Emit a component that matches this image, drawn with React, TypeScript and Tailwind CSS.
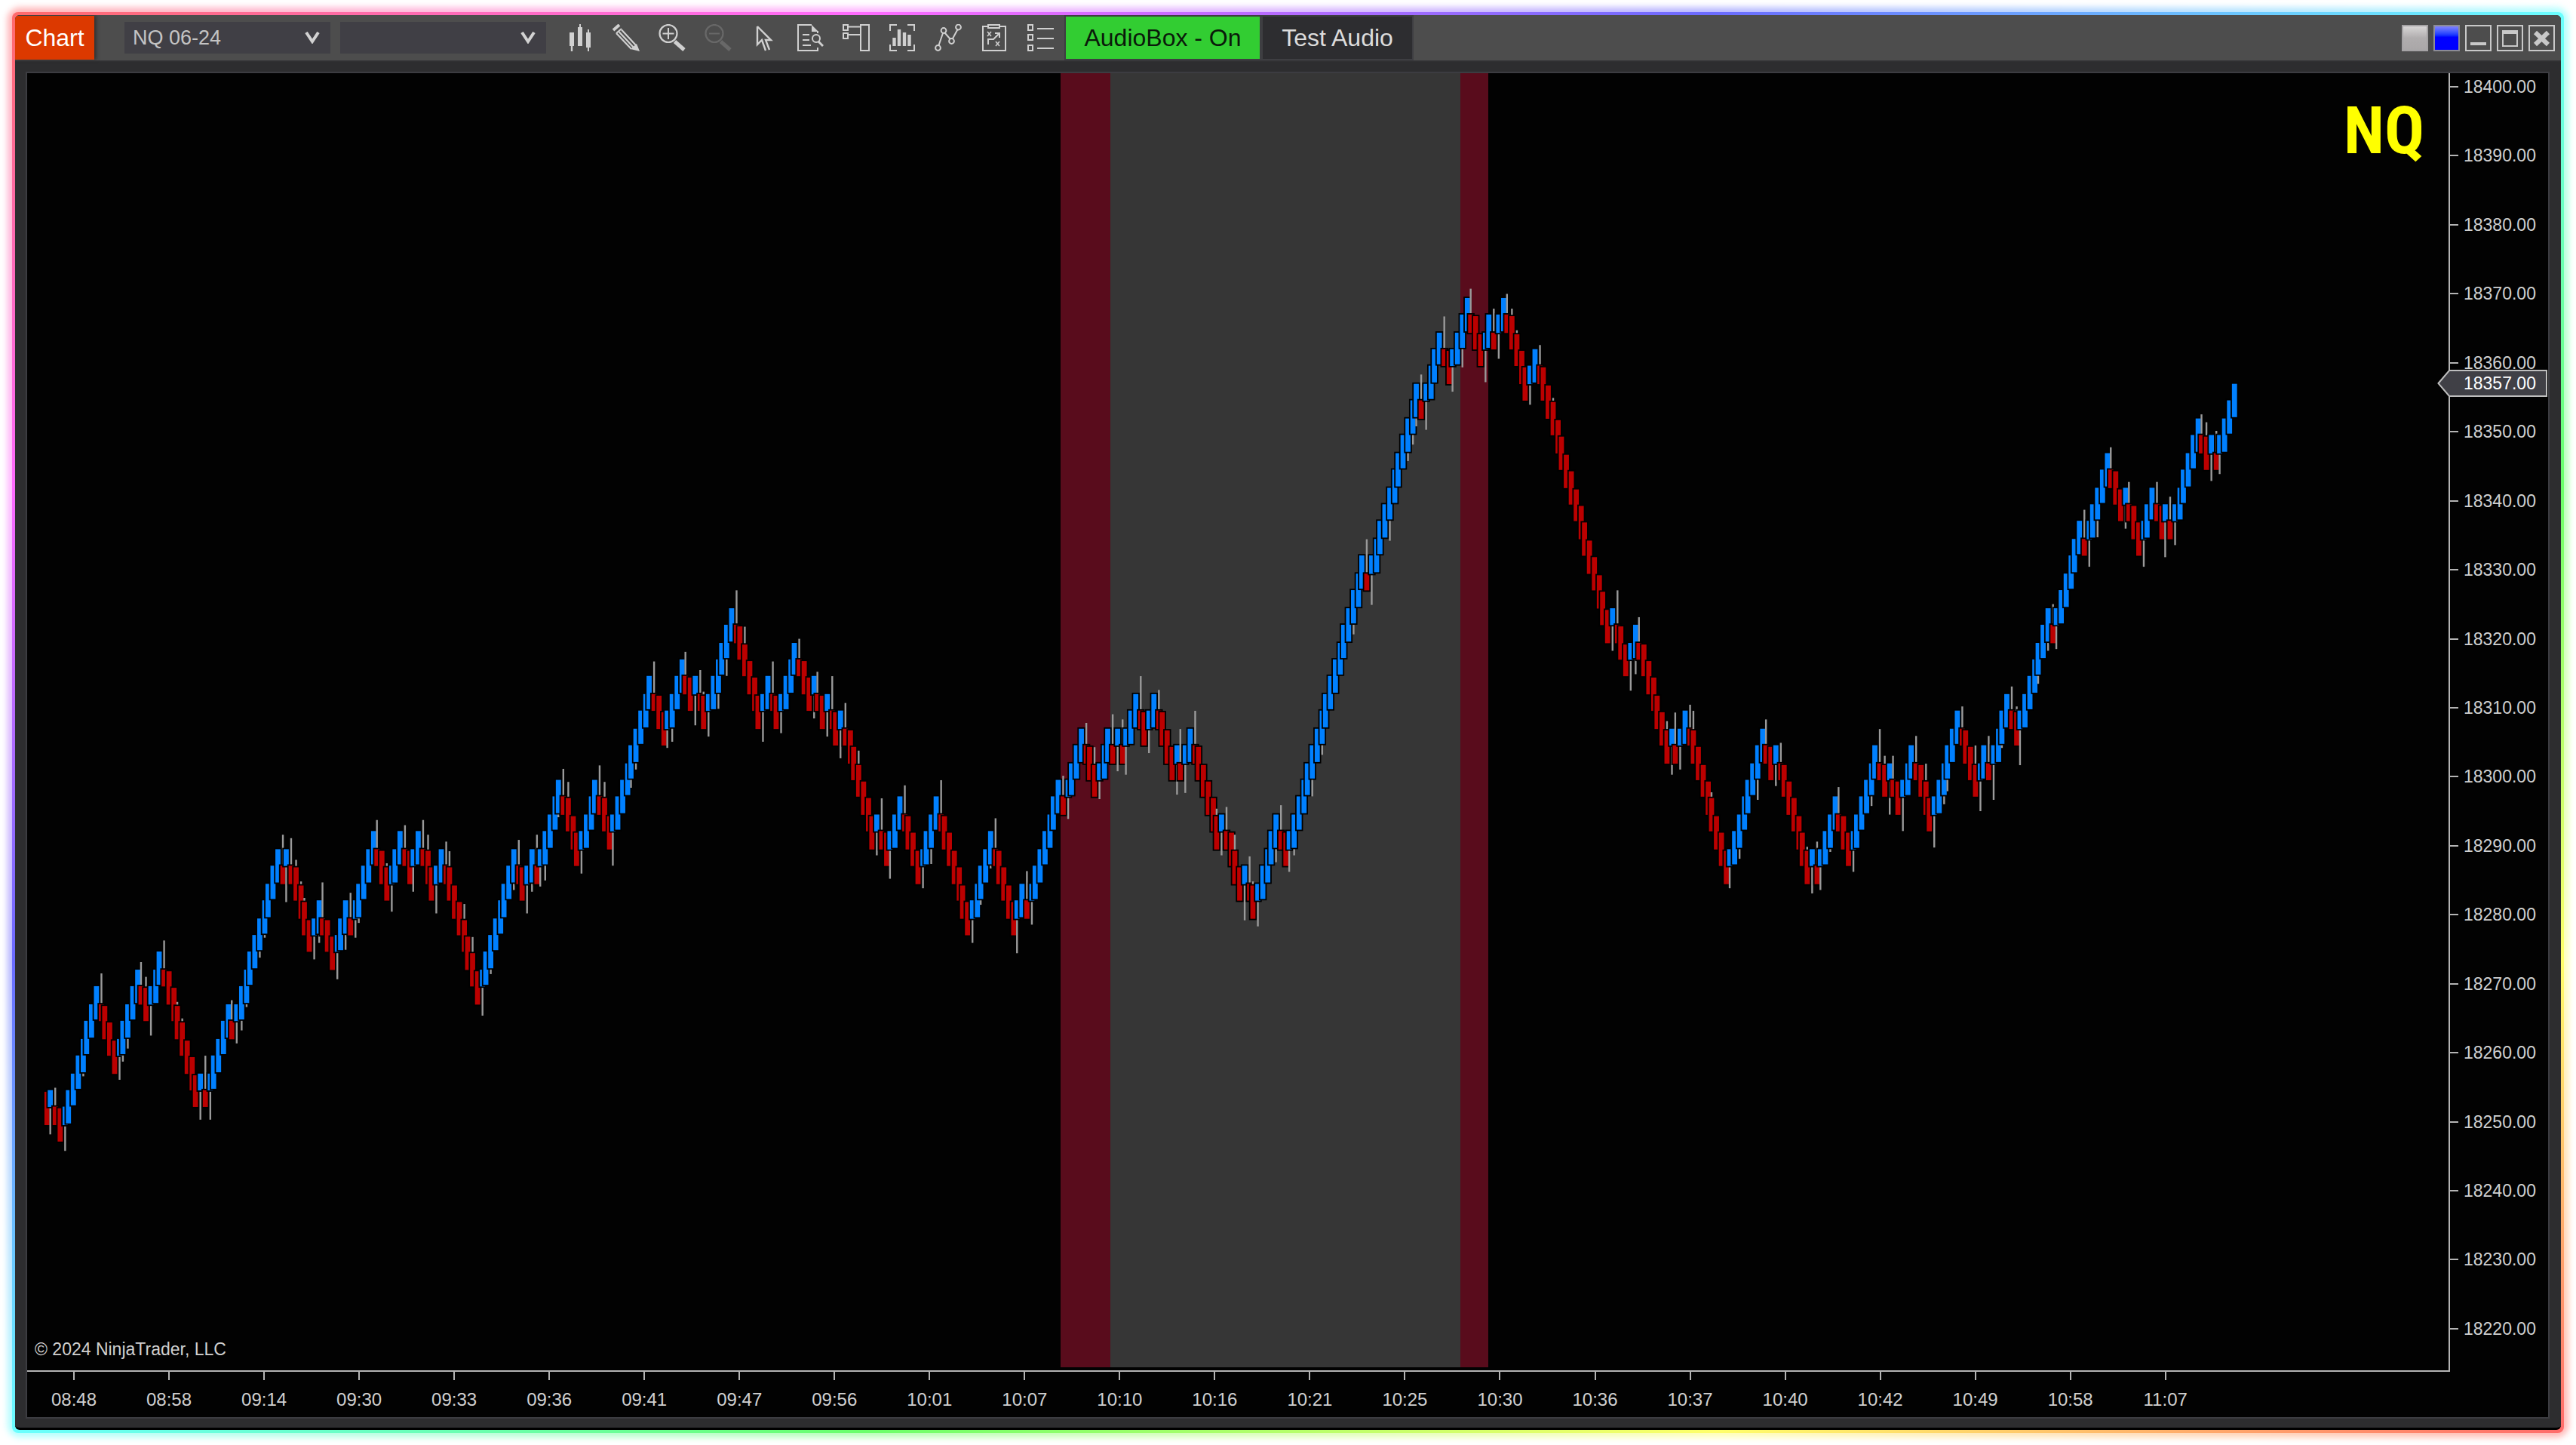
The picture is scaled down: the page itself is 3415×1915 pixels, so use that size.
import type { ReactNode } from 'react';
import clsx from 'clsx';

const times = [
  '08:48', '08:58', '09:14', '09:30', '09:33', '09:36', '09:41', '09:47', '09:56', '10:01', '10:07', '10:10',
  '10:16', '10:21', '10:25', '10:30', '10:36', '10:37', '10:40', '10:42', '10:49', '10:58', '11:07'
];

const prices = Array.from({ length: 19 }, (_, i) => `${18400 - i * 10}.00`);

// Renko swings: [brick level where the swing ends, ticks the first bar's wick reaches past the previous swing]
const swings: [number, number][] = [
  [3, 5], [0, 1], [9, 5], [4, 7], [10, 3], [7, 4], [11, 8], [2, 6], [4, 7], [2, 10], [8, 7], [6, 2], [17, 2],
  [15, 8], [17, 10], [11, 6], [14, 4], [10, 10], [14, 5], [12, 4], [18, 1], [14, 6], [18, 6], [15, 3], [18, 4],
  [14, 6], [17, 7], [8, 4], [17, 6], [14, 5], [17, 7], [15, 8], [21, 1], [16, 6], [21, 4], [17, 8], [27, 9],
  [23, 8], [28, 1], [25, 4], [27, 8], [24, 3], [31, 4], [24, 10], [27, 7], [24, 8], [29, 2], [25, 2], [27, 4],
  [24, 2], [26, 4], [23, 10], [25, 7], [17, 4], [19, 3], [16, 9], [20, 7], [15, 6], [20, 2], [12, 9], [18, 4],
  [12, 7], [15, 10], [13, 7], [21, 3], [19, 2], [24, 2], [20, 3], [24, 1], [22, 8], [24, 4], [22, 5], [26, 6],
  [23, 10], [26, 4], [21, 2], [23, 8], [21, 9], [24, 7], [17, 10], [19, 3], [14, 4], [16, 11], [13, 5], [19, 4],
  [16, 5], [34, 3], [32, 9], [44, 8], [42, 5], [47, 6], [44, 9], [49, 4], [45, 5], [48, 9], [46, 3], [49, 5],
  [43, 2], [46, 2], [29, 2], [31, 4], [27, 10], [30, 8], [22, 4], [24, 6], [22, 9], [25, 3], [15, 3], [24, 2],
  [21, 5], [23, 3], [15, 1], [17, 5], [15, 4], [20, 3], [16, 5], [23, 3], [20, 9], [22, 10], [19, 4], [23, 9],
  [18, 5], [25, 9], [20, 2], [23, 8], [21, 5], [26, 11], [23, 4], [31, 11], [29, 2], [36, 3], [34, 6], [40, 6],
  [36, 3], [38, 4], [34, 3], [38, 6], [35, 3], [37, 10], [35, 4], [42, 3], [39, 2], [41, 6], [39, 2], [44, 2]
];

// ticks of open-side wick on bars inside a swing, by bar number
const innerWicks: Record<number, number> = {
  8: 1, 17: 3, 18: 5, 22: 5, 29: 1, 30: 1, 43: 5, 44: 1, 47: 3, 48: 1, 55: 3, 56: 1, 57: 1, 60: 4, 66: 8, 69: 2,
  75: 1, 84: 8, 89: 8, 92: 8, 94: 8, 98: 2, 103: 3, 107: 4, 110: 8, 113: 1, 115: 8, 123: 8, 129: 4, 130: 3,
  138: 7, 145: 1, 148: 8, 150: 9, 154: 9, 179: 7, 195: 8, 206: 2, 208: 1, 231: 9, 258: 3, 262: 8, 266: 1,
  271: 7, 275: 3, 279: 9, 281: 5, 288: 5, 296: 11, 300: 4, 301: 5, 302: 4, 312: 10, 323: 3, 324: 1, 332: 1,
  350: 8, 357: 4, 363: 10, 367: 2, 373: 5, 377: 11, 388: 1, 393: 1, 402: 5, 405: 4, 414: 9, 418: 4, 419: 6,
  425: 10, 431: 1, 434: 2, 439: 4, 441: 4, 452: 9, 476: 7
};

const PLOT_W = 3210;
const PLOT_H = 1719;
const UNIT = 2.187;
const TICK = 2.286;

type Bar = { x: number; top: number; bottom: number; up: boolean; wickFrom: number; wickTo: number };

const barX = (k: number) => 26.3 + UNIT * (3 * k - Math.ceil((k * 42) / 169));
const levelY = (level: number) => 708.2 + UNIT * Math.floor(10.44 * (31 - level) + 0.14);

const buildBars = () => {
  const bars: Bar[] = [];
  const add = (close: number, up: boolean, reversal: boolean, reach: number) => {
    const height = reversal ? 1 : 2;
    const high = up ? close : close + height;
    const low = up ? close - height : close;
    const top = levelY(high) + (!up && !reversal ? UNIT : 0);
    const bottom = levelY(low) + (up && !reversal ? 0 : UNIT);
    const past = reversal ? 1 : 0;
    const wickTo = up ? levelY(low - past) + UNIT + reach * TICK : levelY(high + past) - reach * TICK;
    bars.push({ x: barX(bars.length), top, bottom, up, wickFrom: up ? bottom : top, wickTo: reach ? wickTo : up ? bottom : top });
  };

  let level = 1;
  add(level, false, false, 0);
  swings.forEach(([end, reach]) => {
    const up = end > level;
    const step = up ? 1 : -1;
    level += 2 * step;
    add(level, up, true, reach);
    while (level !== end) {
      level += step;
      add(level, up, false, innerWicks[bars.length] ?? 0);
    }
  });
  return bars;
};

const bars = buildBars();

const Plot = () => (
  <svg
    className="absolute inset-0 h-full w-full"
    viewBox={`0 0 ${PLOT_W} ${PLOT_H}`}
    preserveAspectRatio="none"
    role="img"
    aria-label="NQ 06-24 price chart"
  >
    <rect x="1370" y="0" width="66" height="1715" fill="#590c1c" />
    <rect x="1436" y="0" width="464" height="1715" fill="#363636" />
    <rect x="1900" y="0" width="37" height="1715" fill="#590c1c" />
    {bars.map((bar, i) => (
      <g key={i}>
        {bar.wickFrom !== bar.wickTo && (
          <line x1={bar.x} x2={bar.x} y1={bar.wickFrom} y2={bar.wickTo} stroke="#9a9a9a" strokeWidth="2.4" />
        )}
        <rect
          x={bar.x - 4.3}
          y={bar.top}
          width="8.6"
          height={bar.bottom - bar.top}
          fill={bar.up ? '#0080ff' : '#bc0000'}
          stroke="#000"
          strokeWidth="1.8"
        />
      </g>
    ))}
  </svg>
);

const Icon = ({ children }: { children: ReactNode }) => (
  <svg className="h-9 w-9" viewBox="0 0 36 36" fill="none" stroke="currentColor" strokeWidth="2" aria-hidden="true">
    {children}
  </svg>
);

const tools: { label: string; disabled?: boolean; icon: ReactNode }[] = [
  {
    label: 'Bar type',
    icon: (
      <g fill="currentColor" stroke="none">
        <path d="M4 11h6v18H8.200v7H5.800v-7H4zM15 4h2V0h2v4h2v25h-6zM26 11h2V7h2v4h2v20h-2v5h-2v-5h-2z" />
      </g>
    )
  },
  {
    label: 'Drawing tools',
    icon: (
      <>
        <path d="M1 8l8-7" strokeWidth="4" />
        <path d="M5 12L25 33M8.500 10l20 21.500M12 7.500L31 28" strokeWidth="2.200" />
        <path d="M5 12l7-6" />
        <path d="M24 33l8-7 4 10z" fill="currentColor" stroke="none" />
      </>
    )
  },
  {
    label: 'Zoom in',
    icon: (
      <>
        <circle cx="13" cy="12.500" r="11.500" strokeWidth="2.200" />
        <path d="M13 5v15M5.500 12.500h15" />
        <path d="M21.500 23L34 34" strokeWidth="5" />
      </>
    )
  },
  {
    label: 'Zoom out',
    disabled: true,
    icon: (
      <>
        <circle cx="13" cy="12.500" r="11.500" strokeWidth="2.200" />
        <path d="M6 12.500h14" />
        <path d="M21.500 23L34 34" strokeWidth="5" />
      </>
    )
  },
  {
    label: 'Cursor',
    icon: <path d="M9 3v24l6-6 5 14M25 34l-5-13h7L9 3" strokeWidth="2.400" />
  },
  {
    label: 'Data box',
    icon: (
      <>
        <path d="M28 31v4H2V1h18M28 12v-3" />
        <path d="M20 1v9h9z" fill="currentColor" stroke="none" />
        <path d="M8 14h9M8 21h9M8 28h11" />
        <circle cx="26" cy="19" r="5" />
        <path d="M29 23l6 6" strokeWidth="3" />
      </>
    )
  },
  {
    label: 'Chart trader',
    icon: <path d="M1 1h6v7H1zM1 12h6v7H1zM24 1h11v34H24zM8 3.500h16M8 14h16" />
  },
  {
    label: 'Indicators',
    icon: (
      <>
        <path d="M2 9V1h9M25 1h9v8M2 27v8h9M25 35h9v-8" />
        <path d="M7.500 18v11M14 7v22M21 11v18M27.500 14v15" strokeWidth="4.400" />
      </>
    )
  },
  {
    label: 'Drawing objects',
    icon: (
      <>
        <circle cx="4.500" cy="31.500" r="3.400" />
        <circle cx="12" cy="8.500" r="3.400" />
        <circle cx="22.500" cy="22.500" r="3.400" />
        <circle cx="31.500" cy="4" r="3.400" />
        <path d="M5.500 28L11 12M13.500 11.500l7 8M24 19l6.500-12" />
      </>
    )
  },
  {
    label: 'Strategies',
    icon: (
      <>
        <path d="M10 3H3v32h30V3h-7" />
        <path d="M10 1h15v4H10z" />
        <path d="M9 10l5 6M14 10l-5 6M20 23l5 6M25 23l-5 6" strokeWidth="1.600" />
        <path d="M10 27v-7h7l8-8M19 12h6v6" />
      </>
    )
  },
  {
    label: 'Properties',
    icon: <path d="M2 1h6v7H2zM2 14h6v7H2zM2 28h6v7H2zM14 6h22M14 19h22M14 32h22" />
  }
];

const Picker = ({ label, value }: { label: string; value: string }) => (
  <div className="relative flex h-[42px] w-[273px] items-center bg-[#403f45]">
    <select aria-label={label} className="h-full w-full appearance-none px-[11px] text-[27px] text-[#c4c4c4]">
      <option>{value}</option>
    </select>
    <svg className="pointer-events-none absolute right-[14px] h-[16px] w-[20px]" viewBox="0 0 20 16" aria-hidden="true">
      <path d="M2 1l8 12 8-12" fill="none" stroke="#d2d2d2" strokeWidth="4" />
    </svg>
  </div>
);

const TitleBar = () => (
  <header className="flex h-[60px] items-center bg-[#4d4d4d] pr-2 shadow-[0_1px_2px_#3a3a3c]">
    <button className="h-[58px] w-[105px] bg-[#dc3900] text-[32px] text-white shadow-[3px_0_4px_#333]">Chart</button>
    <div className="ml-10 flex gap-[13px]">
      <Picker label="Instrument" value="NQ 06-24" />
      <Picker label="Interval" value="" />
    </div>
    <nav className="ml-[27px] flex gap-[25px] text-[#d0d0d0]">
      {tools.map((tool) => (
        <button key={tool.label} aria-label={tool.label} disabled={tool.disabled} className={clsx(tool.disabled && 'text-[#686868]')}>
          <Icon>{tool.icon}</Icon>
        </button>
      ))}
    </nav>
    <div className="ml-[14px] flex bg-[#3e3e42] p-[2px] text-[32px]">
      <button className="h-[56px] w-[257px] bg-[#32cd32] text-[#0a1a0a]">AudioBox - On</button>
      <button className="ml-1 h-[56px] w-[198px] bg-[#2d2d30] text-[#dcdcdc]">Test Audio</button>
    </div>
    <div className="ml-auto flex gap-[7px] text-[#c8c8c8]">
      <button aria-label="Link instrument" className="h-[35px] w-[35px] border-2 border-[#a5a3a5] bg-linear-to-b from-[#d8d6d6] via-[#b0adae] to-[#aaa7a8]" />
      <button aria-label="Link interval" className="h-[35px] w-[35px] border-2 border-[#8c8c96] bg-linear-to-b from-[#8080ff] via-[#0000ff] via-45% to-[#0000ff]" />
      <button aria-label="Minimize" className="h-[35px] w-[35px] border-2 border-current">
        <svg viewBox="0 0 31 31" aria-hidden="true">
          <path d="M5 23h21" stroke="currentColor" strokeWidth="4" />
        </svg>
      </button>
      <button aria-label="Maximize" className="h-[35px] w-[35px] border-2 border-current">
        <svg viewBox="0 0 31 31" fill="none" stroke="currentColor" aria-hidden="true">
          <path d="M6 6h19v20H6z" strokeWidth="2" />
          <path d="M5 7.500h21" strokeWidth="5" />
        </svg>
      </button>
      <button aria-label="Close" className="h-[35px] w-[35px] border-2 border-current">
        <svg viewBox="0 0 31 31" aria-hidden="true">
          <path d="M7 8l17 16M24 8L7 24" stroke="currentColor" strokeWidth="6" />
        </svg>
      </button>
    </div>
  </header>
);

const PriceAxis = () => (
  <div className="relative flex w-[130px] flex-col justify-between pt-[6px] pb-[45px] text-[23px] leading-6 text-[#d0d0d0]">
    {prices.map((price) => (
      <div key={price} className="flex items-center gap-[7px]">
        <span className="h-[2px] w-[11px] bg-[#b4b4b4]" />
        {price}
      </div>
    ))}
    <div className="absolute top-[393px] right-px flex h-9 w-[146px] items-center pl-[35px] text-white">
      <svg className="absolute inset-0 h-full w-full" viewBox="0 0 146 36" aria-hidden="true">
        <path d="M1.500 18L16 1h129v34H16z" fill="#404046" stroke="#bebebe" strokeWidth="2" />
      </svg>
      <span className="relative">18357.00</span>
    </div>
  </div>
);

const TimeAxis = () => (
  <div className="flex h-[60px] justify-between pr-[475px] pl-[30px] text-2xl leading-6 text-[#d0d0d0]">
    {times.map((time) => (
      <div key={time} className="flex w-16 flex-col items-center gap-[14px]">
        <span className="h-[11px] w-[2px] bg-[#b4b4b4]" />
        {time}
      </div>
    ))}
  </div>
);

export default function App() {
  return (
    <div className="relative flex min-h-screen flex-col bg-white p-5 font-['Liberation_Sans',Arial,sans-serif]">
      <div className="absolute inset-[10px] rounded-2xl bg-[linear-gradient(to_bottom_right,#ff6b6b,#ff6bff,#6b6bff,#6bffff,#6bff6b,#ffff6b,#ff6b6b)] opacity-50 blur-[4px]" />
      <div className="absolute inset-[16px] rounded-lg bg-[linear-gradient(to_bottom_right,#ff6b6b,#ff6bff,#6b6bff,#6bffff,#6bff6b,#ffff6b,#ff6b6b)]" />
      <div className="relative flex flex-1 flex-col overflow-hidden rounded-md border-b-[3px] border-black bg-[#2d2d2f]">
        <TitleBar />
        <main className="flex flex-1 flex-col pt-[15px] pr-[15px] pb-3 pl-[14px]">
          <div className="flex flex-1 flex-col border-2 border-[#3c3c41] bg-[#020202]">
            <div className="flex flex-1">
              <div className="relative flex-1 border-r-2 border-b-2 border-[#b4b4b4]">
                <Plot />
                <div className="absolute top-[26px] right-[32px] font-['Liberation_Sans_Narrow','Roboto_Condensed','Open_Sans_Condensed','DejaVu_Sans_Condensed',sans-serif] text-[88px] leading-[100px] font-bold text-[#ffff00]">
                  NQ
                </div>
                <p className="absolute bottom-[16px] left-[10px] text-[23px] leading-6 text-[#d0d0d0]">© 2024 NinjaTrader, LLC</p>
              </div>
              <PriceAxis />
            </div>
            <TimeAxis />
          </div>
        </main>
      </div>
    </div>
  );
}
